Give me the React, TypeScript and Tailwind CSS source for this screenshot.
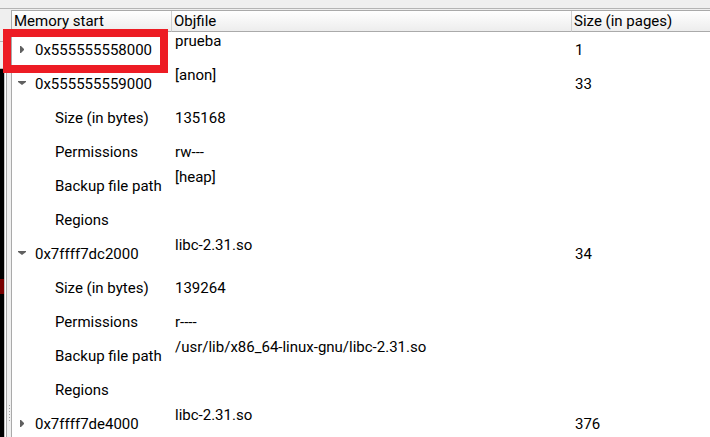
import { Fragment, useState } from "react";

type Region = {
  start: string;
  objfile: string;
  pages: string;
  open: boolean;
  details: { label: string; value: string; top?: boolean }[];
};

const regions: Region[] = [
  { start: "0x555555558000", objfile: "prueba", pages: "1", open: false, details: [] },
  {
    start: "0x555555559000",
    objfile: "[anon]",
    pages: "33",
    open: true,
    details: [
      { label: "Size (in bytes)", value: "135168" },
      { label: "Permissions", value: "rw---" },
      { label: "Backup file path", value: "[heap]", top: true },
      { label: "Regions", value: "" },
    ],
  },
  {
    start: "0x7ffff7dc2000",
    objfile: "libc-2.31.so",
    pages: "34",
    open: true,
    details: [
      { label: "Size (in bytes)", value: "139264" },
      { label: "Permissions", value: "r----" },
      { label: "Backup file path", value: "/usr/lib/x86_64-linux-gnu/libc-2.31.so", top: true },
      { label: "Regions", value: "" },
    ],
  },
  { start: "0x7ffff7de4000", objfile: "libc-2.31.so", pages: "376", open: false, details: [] },
];

function RegionRows({ region }: { region: Region }) {
  const [open, setOpen] = useState(region.open);
  return (
    <Fragment>
      <tr className="h-[34px]">
        <td className="p-0 pt-[2px] align-middle">
          <button
            type="button"
            aria-expanded={open}
            onClick={() => setOpen(!open)}
            className="flex items-center pl-[6px] leading-[18px]"
          >
            <svg viewBox="0 0 8 8" className="mr-[9px] h-2 w-2 fill-[#606060]" aria-hidden="true">
              {open ? <path d="M0 1h8v1L4 5 0 2z" /> : <path d="M2 0h1l3 3v1L3 7H2z" />}
            </svg>
            {region.start}
          </button>
        </td>
        <td className="p-0 pl-[3px] align-top leading-[18px]">{region.objfile}</td>
        <td className="p-0 pt-[2px] pl-[3px] align-middle leading-[18px]">{region.pages}</td>
      </tr>
      {open &&
        region.details.map((d) => (
          <tr key={d.label} className="h-[34px]">
            <td className="p-0 pt-[2px] pl-[43px] align-middle leading-[18px]">{d.label}</td>
            <td className={d.top ? "p-0 pl-[3px] align-top leading-[18px]" : "p-0 pt-[2px] pl-[3px] align-middle leading-[18px]"}>
              {d.value}
            </td>
            <td className="p-0" />
          </tr>
        ))}
    </Fragment>
  );
}

export default function App() {
  return (
    <div className="relative flex h-screen flex-col overflow-hidden bg-[#efefef] font-[Roboto,'Noto_Sans',sans-serif] text-[15px] text-black">
      <div className="h-[9px] shrink-0 border-b border-[#b4b4b4]" />
      <div className="flex min-h-0 flex-1">
        <div className="flex w-[11px] shrink-0 flex-col pt-[32px]">
          <div className="flex min-h-0 flex-1">
            <div className="flex w-[5px] shrink-0 flex-col border-r border-[#c4c4c4]">
              <div className="h-[28px] shrink-0 border-y border-[#b4b4b4]" />
              <div className="flex-1 bg-black pt-[210px]">
                <div className="h-[15px] bg-[#780000]" />
              </div>
            </div>
            <div className="w-px shrink-0 bg-white" />
            <div className="flex flex-1 flex-col items-center border-l border-[#a8a8a8] pt-[364px]">
              <div className="flex flex-col gap-[2px]">
                {[0, 1, 2, 3, 4, 5].map((dot) => (
                  <div key={dot} className="size-px bg-[#a0a0a0]" />
                ))}
              </div>
            </div>
          </div>
        </div>
        <main className="mt-px min-w-0 flex-1 overflow-hidden border-t border-l border-[#aaaaaa] bg-white">
          <table className="w-full table-fixed border-separate border-spacing-0 text-left whitespace-nowrap">
            <colgroup>
              <col className="w-[160px]" />
              <col className="w-[400px]" />
              <col />
            </colgroup>
            <thead className="bg-linear-to-b from-white to-[#ececec]">
              <tr className="h-[21px]">
                <th className="border-r border-b border-r-[#cfcfcf] border-b-[#aaaaaa] p-0 pl-[2px] leading-[20px] font-normal">Memory start</th>
                <th className="border-r border-b border-r-[#cfcfcf] border-b-[#aaaaaa] p-0 pl-[2px] leading-[20px] font-normal">Objfile</th>
                <th className="border-b border-[#aaaaaa] p-0 pl-[2px] leading-[20px] font-normal">Size (in pages)</th>
              </tr>
            </thead>
            <tbody>
              {regions.map((r) => (
                <RegionRows key={r.start} region={r} />
              ))}
            </tbody>
          </table>
        </main>
      </div>
      <div className="pointer-events-none absolute top-[29px] left-[3px] h-[44px] w-[165px] border-8 border-[#ed1c24]" />
    </div>
  );
}
